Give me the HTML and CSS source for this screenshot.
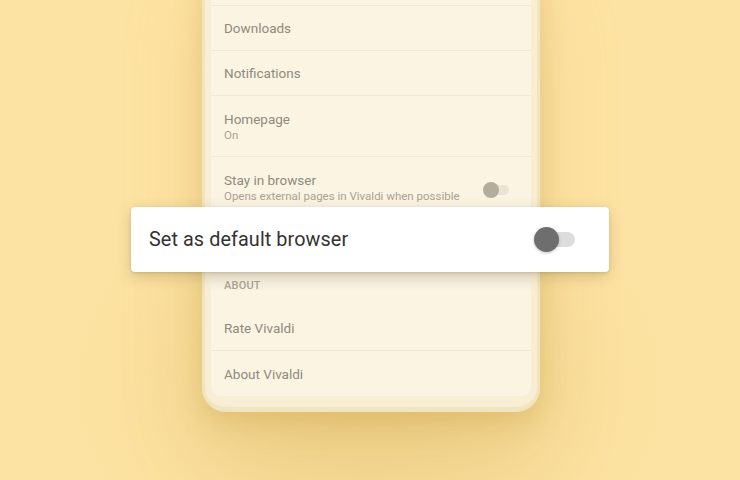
FILE: index.html
```html
<!DOCTYPE html>
<html lang="en">
<head>
<meta charset="utf-8">
<title>Vivaldi settings</title>
<link rel="stylesheet" href="styles.css">
</head>
<body>
<div class="stage">
  <div class="phone">
    <div class="screen">
      <div class="row"></div>
      <div class="row"><span class="title">Downloads</span></div>
      <div class="row"><span class="title">Notifications</span></div>
      <div class="row row-two">
        <span class="title">Homepage</span>
        <span class="sub">On</span>
      </div>
      <div class="row row-two row-toggle">
        <div class="texts">
          <span class="title">Stay in browser</span>
          <span class="sub">Opens external pages in Vivaldi when possible</span>
        </div>
        <span class="toggle small"><span class="thumb"></span></span>
      </div>
      <div class="row row-hidden"></div>
      <div class="header">ABOUT</div>
      <div class="row"><span class="title">Rate Vivaldi</span></div>
      <div class="row last"><span class="title">About Vivaldi</span></div>
    </div>
  </div>
  <div class="card">
    <span class="card-title">Set as default browser</span>
    <span class="toggle big"><span class="thumb"></span></span>
  </div>
</div>
</body>
</html>
```
FILE: styles.css
```css
html, body {
  margin: 0;
  padding: 0;
}
body {
  background: #fde3a3;
  font-family: Roboto, "Noto Sans", sans-serif;
}
.stage {
  position: relative;
  width: 740px;
  height: 480px;
  overflow: hidden;
  display: flex;
  justify-content: center;
  padding-left: 2px;
  box-sizing: border-box;
  background: radial-gradient(ellipse 300px 230px at 370px 385px, rgba(214, 176, 90, 0.30), rgba(214, 176, 90, 0) 100%), #fde3a3;
}
.phone {
  width: 338px;
  box-sizing: border-box;
  margin-top: -39px;
  align-self: flex-start;
  background: #f7eed4;
  border: 3px solid #f1e4c0;
  border-top: none;
  border-bottom-width: 5px;
  border-radius: 0 0 24px 24px;
  padding: 0 6px 11px;
  box-shadow: 0 10px 26px rgba(190, 150, 60, 0.28), 0 40px 80px rgba(200, 160, 70, 0.22);
}
.screen {
  background: #fbf4e3;
  border-radius: 0 0 9px 9px;
  display: flex;
  flex-direction: column;
}
.row {
  height: 45px;
  box-sizing: border-box;
  border-bottom: 1px solid #f1e8d3;
  padding: 0 13px;
  display: flex;
  flex-direction: column;
  justify-content: center;
}
.row.last {
  border-bottom: none;
}
.title {
  font-size: 13.5px;
  color: #8f8a7d;
  line-height: 18px;
}
.sub {
  font-size: 11.5px;
  color: #aaa394;
  line-height: 15px;
}
.row-two {
  height: 61px;
  justify-content: flex-start;
  padding-top: 14px;
}
.row-toggle {
  flex-direction: row;
  align-items: flex-start;
  justify-content: space-between;
}
.texts {
  display: flex;
  flex-direction: column;
}
.row-hidden {
  height: 45px;
}
.header {
  height: 43px;
  box-sizing: border-box;
  padding: 16px 13px 0;
  font-size: 11px;
  font-weight: 500;
  color: #aaa394;
  letter-spacing: 0.2px;
  background: linear-gradient(#efe7d6, #fbf4e3 28px);
}
.toggle {
  position: relative;
  display: block;
  flex: none;
}
.toggle.small {
  width: 23px;
  height: 10px;
  margin-top: 14px;
  margin-right: 9px;
  border-radius: 5px;
  background: #ece4d2;
}
.toggle.small .thumb {
  position: absolute;
  left: -3px;
  top: -3px;
  width: 16px;
  height: 16px;
  border-radius: 50%;
  background: #b4ad9c;
}
.card {
  position: absolute;
  left: 131px;
  top: 207px;
  width: 478px;
  height: 65px;
  box-sizing: border-box;
  background: #ffffff;
  border-radius: 4px;
  box-shadow: 0 4px 14px rgba(120, 100, 60, 0.28), 0 1px 3px rgba(0, 0, 0, 0.12);
  display: flex;
  align-items: center;
  justify-content: space-between;
  padding: 0 34px 0 18px;
}
.card-title {
  font-size: 19.8px;
  color: #333333;
  letter-spacing: 0.1px;
}
.toggle.big {
  width: 36px;
  height: 15px;
  border-radius: 8px;
  background: #dddddd;
}
.toggle.big .thumb {
  position: absolute;
  left: -5px;
  top: -5px;
  width: 25px;
  height: 25px;
  border-radius: 50%;
  background: #6e6e6e;
  box-shadow: 0 1px 3px rgba(0, 0, 0, 0.25);
}
```
